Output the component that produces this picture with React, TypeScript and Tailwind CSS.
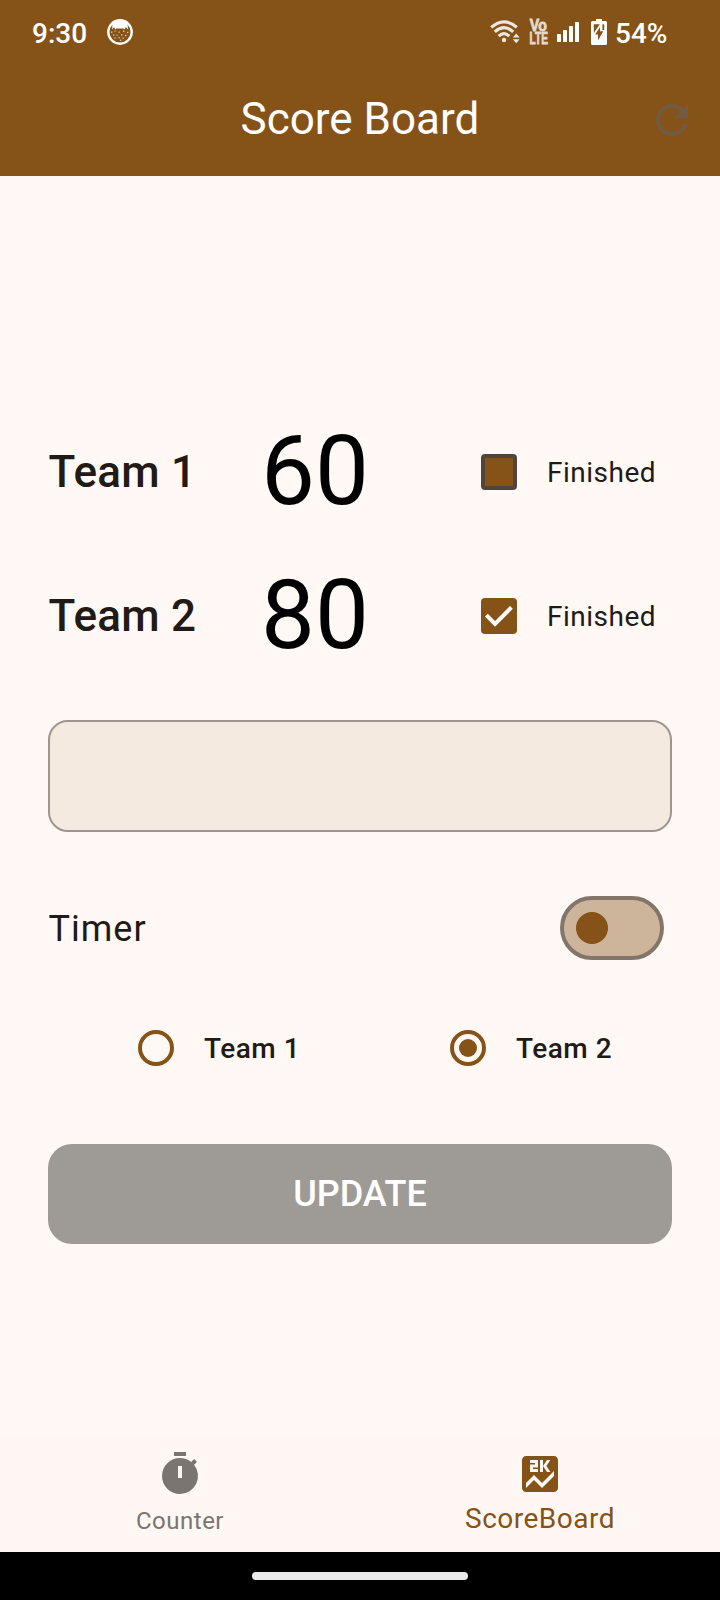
import { MdRefresh, MdScore, MdTimer } from "react-icons/md";

function CatIcon() {
  return (
    <svg width="26" height="26" viewBox="0 0 26 26" className="block">
      <circle cx="13" cy="13" r="11.7" fill="none" stroke="#fff" strokeWidth="2.4" />
      <path
        d="M5 4 Q13 -2 21 4 L20.6 6.6 L21.2 10.6 L18.8 8 L17.8 10.4 L16.6 9.4 L9.4 9.4 L8.2 10.4 L7 8 L5 10.6 L5.4 6.6 Z"
        fill="#fff"
      />
      <g fill="#fff" opacity="0.65">
        <rect x="4" y="12.5" width="1.4" height="1.4" />
        <rect x="7.5" y="11.5" width="1.2" height="1.2" />
        <rect x="11.5" y="12.5" width="1.4" height="1.2" />
        <rect x="16" y="11.5" width="1.4" height="1.4" />
        <rect x="20" y="12.8" width="1.4" height="1.2" />
        <rect x="6" y="15.3" width="1.4" height="1.4" />
        <rect x="9.5" y="15.6" width="1.2" height="1.2" />
        <rect x="14" y="15.2" width="1.4" height="1.4" />
        <rect x="18" y="15.8" width="1.4" height="1.4" />
        <rect x="7.5" y="18.3" width="1.3" height="1.3" />
        <rect x="11.5" y="18" width="1.3" height="1.3" />
        <rect x="15.5" y="18.6" width="1.3" height="1.3" />
        <rect x="13" y="20.6" width="1.3" height="1.3" />
      </g>
    </svg>
  );
}

function WifiIcon() {
  return (
    <svg width="30" height="24" viewBox="0 0 30 24" className="block">
      <g fill="none" stroke="#efe7df" strokeWidth="3.1">
        <path d="M1.2 7.4 Q14 -3.8 26.8 7.4" />
        <path d="M4.8 11.8 Q14 3.6 23.2 11.8" />
        <path d="M8.7 16.2 Q14 11.2 19.3 16.2" />
      </g>
      <circle cx="14" cy="20" r="2.2" fill="#efe7df" />
      <path d="M26.2 13.4 L29.6 17.6 H22.8 Z M26.2 23.2 L29.6 19.2 H22.8 Z" fill="#efe7df" />
    </svg>
  );
}

function VolteIcon() {
  return (
    <svg width="20" height="26" viewBox="0 0 20 26" className="block overflow-visible">
      <g
        fill="#e8dccf"
        stroke="#e8dccf"
        strokeWidth="0.8"
        fontFamily="Liberation Sans, sans-serif"
        fontWeight="700"
      >
        <text x="0.8" y="11.6" fontSize="16" textLength="17" lengthAdjust="spacingAndGlyphs">
          Vo
        </text>
        <text x="0.6" y="25" fontSize="16" textLength="18.4" lengthAdjust="spacingAndGlyphs">
          LTE
        </text>
      </g>
    </svg>
  );
}

function SignalIcon() {
  return (
    <svg width="22" height="20" viewBox="0 0 22 20" className="block" fill="#fff">
      <rect x="0" y="12" width="4" height="8" rx="0.6" />
      <rect x="6" y="8" width="4" height="12" rx="0.6" />
      <rect x="12" y="4" width="4" height="16" rx="0.6" />
      <rect x="18" y="0" width="4" height="20" rx="0.6" />
    </svg>
  );
}

function BatteryIcon() {
  return (
    <svg width="16" height="26" viewBox="0 0 16 26" className="block">
      <path
        d="M5 0 H11 V2 H14.5 Q16 2 16 3.5 V24.5 Q16 26 14.5 26 H1.5 Q0 26 0 24.5 V3.5 Q0 2 1.5 2 H5 Z"
        fill="#fff"
      />
      <path d="M2.8 5.3 H8.8 L2.8 14 Z" fill="#855318" />
      <path d="M11.4 5.3 H13.2 V11 H11.4 Z" fill="#855318" />
      <path d="M9 8 V12.2 H12.2 L7 21.5 V15.6 H4.2 Z" fill="#855318" />
    </svg>
  );
}

function Checkbox({ checked }: { checked: boolean }) {
  return checked ? (
    <div className="h-9 w-9 rounded-[4px] bg-[#855318]">
      <svg width="36" height="36" viewBox="0 0 36 36" className="block">
        <path d="M5.4 17.2 L14 25.8 L30.4 9.4" fill="none" stroke="#fff" strokeWidth="4" />
      </svg>
    </div>
  ) : (
    <div className="h-9 w-9 rounded-[4px] border-4 border-[#51443a] bg-[#855318]" />
  );
}

function Radio({ selected }: { selected: boolean }) {
  return (
    <div className="flex h-9 w-9 shrink-0 items-center justify-center rounded-full border-4 border-[#855318]">
      {selected && <div className="h-[18px] w-[18px] rounded-full bg-[#855318]" />}
    </div>
  );
}

function ScoreRow({ team, score, finished }: { team: string; score: number; finished: boolean }) {
  return (
    <div className="flex h-36 items-center pl-[48.5px]">
      <div className="w-[212.5px] text-[44px] font-medium tracking-[0.25px]">{team}</div>
      <div className="w-[220px] pb-[2px] text-[96px] leading-none text-black">{score}</div>
      <Checkbox checked={finished} />
      <div className="pt-[2px] pl-[30px] text-[28px] tracking-[0.5px]">Finished</div>
    </div>
  );
}

function RadioOption({ team, selected }: { team: string; selected: boolean }) {
  return (
    <div className="flex w-[312px] shrink-0 items-center gap-[30px]">
      <Radio selected={selected} />
      <span className="pt-[2px] text-[28px] font-medium tracking-[0.5px]">{team}</span>
    </div>
  );
}

export default function App() {
  return (
    <div className="flex h-[1600px] w-[720px] flex-col overflow-hidden bg-[#fff8f5] font-['Roboto',sans-serif] text-[#211a16]">
      <header className="flex h-44 flex-col bg-[#855318] text-white">
        <div className="flex h-16 items-center pl-8">
          <span className="w-[75px] pt-[3px] text-[28px] font-medium">9:30</span>
          <CatIcon />
          <div className="ml-[357px] flex items-center">
            <WifiIcon />
            <div className="ml-[9px]"><VolteIcon /></div>
            <div className="ml-2"><SignalIcon /></div>
            <div className="ml-3"><BatteryIcon /></div>
            <span className="ml-2 pt-[3px] text-[28px] font-medium">54%</span>
          </div>
        </div>
        <div className="grid h-28 grid-cols-[96px_1fr_96px] items-center">
          <h1 className="col-start-2 pb-[2px] text-center text-[44px]">Score Board</h1>
          <MdRefresh className="ml-6 h-12 w-12 text-[#725a43]" />
        </div>
      </header>

      <main className="flex flex-1 flex-col pt-56">
        <ScoreRow team="Team 1" score={60} finished={false} />
        <ScoreRow team="Team 2" score={80} finished={true} />
        <div className="mx-12 mt-8 h-28 shrink-0 rounded-[20px] border-2 border-[#9f958e] bg-[#f4eae0]" />
        <div className="mt-12 flex h-24 items-center justify-between pr-14 pl-[48.5px]">
          <span className="pt-[2px] text-[36px] tracking-[1px]">Timer</span>
          <div className="flex h-16 w-[104px] items-center rounded-full border-4 border-[#82756a] bg-[#cdb59b] pl-3">
            <div className="h-8 w-8 rounded-full bg-[#855318]" />
          </div>
        </div>
        <div className="mt-6 flex h-24 items-center pl-[138px]">
          <RadioOption team="Team 1" selected={false} />
          <RadioOption team="Team 2" selected={true} />
        </div>
        <button className="mx-12 mt-12 h-[100px] shrink-0 rounded-[24px] bg-[#9e9a96] text-[36px] font-medium text-white">
          UPDATE
        </button>
      </main>

      <nav className="grid h-[116px] grid-cols-2 bg-[#fff7f3]">
        <div className="flex flex-col items-center pt-[14px] text-[#7a7571]">
          <MdTimer className="h-12 w-12" />
          <span className="mt-[7px] text-[24px] leading-8 tracking-[0.5px]">Counter</span>
        </div>
        <div className="flex flex-col items-center pt-[14px] text-[#855318]">
          <MdScore className="h-12 w-12" />
          <span className="mt-[5px] text-[28px] leading-8 tracking-[0.5px]">ScoreBoard</span>
        </div>
      </nav>
      <div className="flex h-12 items-center justify-center bg-black">
        <div className="h-2 w-[216px] rounded-full bg-[#e9e9e9]" />
      </div>
    </div>
  );
}
